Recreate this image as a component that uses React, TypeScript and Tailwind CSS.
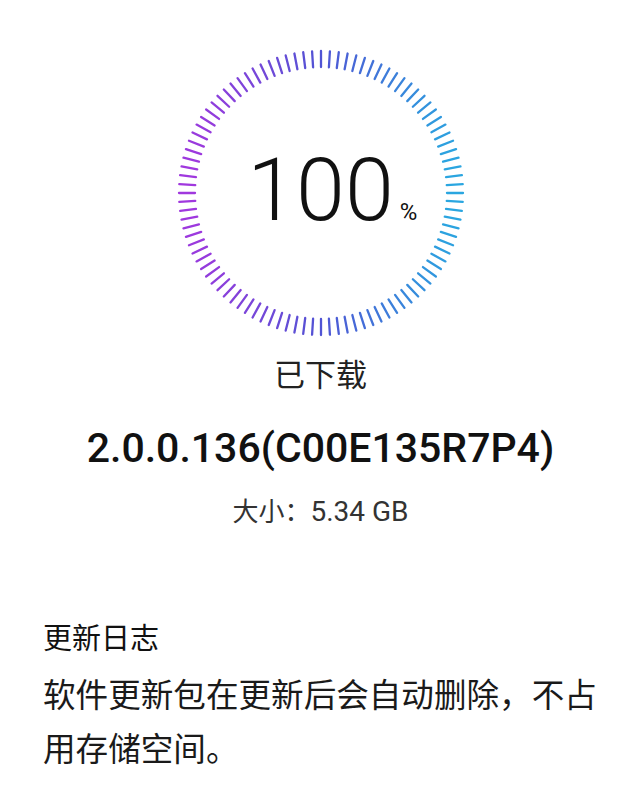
import React from 'react';

type RGB = [number, number, number];

const LEFT: RGB = [160, 56, 222];
const MID: RGB = [80, 84, 212];
const RIGHT: RGB = [42, 166, 224];

const mix = (a: RGB, b: RGB, t: number): string => {
  const c = a.map((v, i) => Math.round(v + (b[i] - v) * t));
  return `rgb(${c[0]},${c[1]},${c[2]})`;
};

// colour runs left (purple) -> middle (indigo) -> right (cyan)
const tickColor = (x: number): string => {
  if (x < 0.5) return mix(LEFT, MID, x / 0.5);
  return mix(MID, RIGHT, (x - 0.5) / 0.5);
};

const ProgressRing: React.FC = () => {
  const size = 290;
  const c = size / 2;
  const outer = 142;
  const inner = 126;
  const count = 100;

  const ticks = Array.from({ length: count }, (_, i) => {
    const a = (i / count) * Math.PI * 2 - Math.PI / 2;
    const cos = Math.cos(a);
    const sin = Math.sin(a);
    return {
      x1: c + cos * inner,
      y1: c + sin * inner,
      x2: c + cos * outer,
      y2: c + sin * outer,
      color: tickColor((cos + 1) / 2),
    };
  });

  return (
    <div className="relative w-[290px] h-[290px]">
      <svg width={size} height={size} viewBox={`0 0 ${size} ${size}`} className="block">
        {ticks.map((t, i) => (
          <line
            key={i}
            x1={t.x1}
            y1={t.y1}
            x2={t.x2}
            y2={t.y2}
            stroke={t.color}
            strokeWidth={2.3}
            strokeLinecap="round"
          />
        ))}
      </svg>
      <div className="absolute inset-0 flex items-center justify-center">
        <span className="relative font-['Roboto',sans-serif] font-light text-[88px] leading-none text-[#111] mt-[-6px]">
          100
          <span className="absolute left-full bottom-[10px] ml-[6px] text-[24px] font-normal leading-none">%</span>
        </span>
      </div>
    </div>
  );
};

export default function App() {
  return (
    <div className="min-h-[802px] bg-white font-['Roboto','Noto_Sans_CJK_SC',sans-serif] text-[#1a1a1a]">
      <div className="flex flex-col items-center pt-[48px]">
        <ProgressRing />
        <p className="mt-[15px] text-[31px] leading-[40px] font-['Noto_Sans_CJK_SC',sans-serif] text-[#222]">已下载</p>
        <p className="mt-[31px] text-[41px] leading-[48px] font-medium text-[#111]">2.0.0.136(C00E135R7P4)</p>
        <p className="mt-[20px] text-[28px] leading-[36px] text-[#333]">
          <span className="font-['Noto_Sans_CJK_SC',sans-serif] text-[26px]">大小：</span>5.34 GB
        </p>
      </div>
      <div className="pl-[43px] pr-[30px] mt-[86px] font-['Noto_Sans_CJK_SC',sans-serif]">
        <h2 className="text-[29px] leading-[40px] font-normal text-[#111]">更新日志</h2>
        <p className="mt-[10px] text-[32.6px] leading-[54px] text-[#1a1a1a]">
          软件更新包在更新后会自动删除，不占用存储空间。
        </p>
      </div>
    </div>
  );
}
